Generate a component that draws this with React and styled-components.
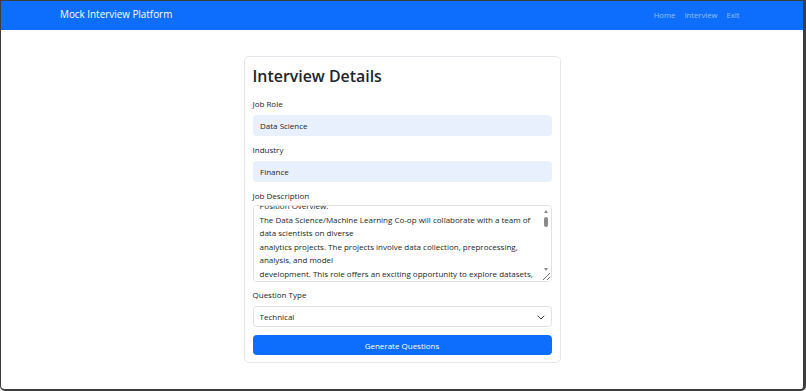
import React, { useEffect, useRef } from "react";
import styled, { createGlobalStyle } from "styled-components";

const GlobalStyle = createGlobalStyle`
  html, body { margin: 0; padding: 0; background: #ffffff; }
  body { font-family: "Open Sans", "Noto Sans", sans-serif; color: #212529; }
  * { box-sizing: border-box; }
`;

const Frame = styled.div`
  height: 391px;
  background: #ffffff;
  border-style: solid;
  border-color: #3c3c3c;
  border-width: 1px 3px 2px 1px;
  border-radius: 0 0 5px 5px;
  overflow: hidden;
`;

const Navbar = styled.nav`
  height: 29px;
  background: #0d6efd;
`;

const NavInner = styled.div`
  height: 100%;
  padding: 0 59px 1px 59px;
  display: flex;
  align-items: center;
  justify-content: space-between;
`;

const Brand = styled.span`
  color: #ffffff;
  font-size: 9.9px;
  line-height: 1;
`;

const NavLinks = styled.div`
  display: flex;
`;

const NavLink = styled.span`
  color: rgba(255, 255, 255, 0.55);
  font-size: 7.7px;
  padding: 0 4.5px;
`;

const Main = styled.main`
  display: flex;
  justify-content: center;
  padding-top: 26px;
`;

const Card = styled.section`
  width: 317px;
  border: 1px solid #e3e6ea;
  border-radius: 5px;
  padding: 8px 8px 7px;
`;

const Title = styled.h2`
  margin: 0 0 9px;
  font-size: 15.9px;
  line-height: 23px;
  font-weight: 600;
  color: #212529;
`;

const Field = styled.div`
  margin-bottom: ${(p) => (p.$last ? "0" : "6.75px")};
`;

const Label = styled.label`
  display: block;
  font-size: 8px;
  line-height: 13.5px;
  margin-bottom: ${(p) => (p.$tight ? "2.5px" : "4.5px")};
  color: #212529;
`;

const Input = styled.input`
  display: block;
  width: 100%;
  height: 21px;
  padding: 0 6.5px;
  font-family: inherit;
  font-size: 8px;
  color: #212529;
  background: ${(p) => (p.$filled ? "#e8f0fe" : "#ffffff")};
  border: 1px solid ${(p) => (p.$filled ? "#e8f0fe" : "#dee2e6")};
  border-radius: 3.5px;
  outline: none;
`;

const AreaWrap = styled.div`
  position: relative;
`;

const TextArea = styled.textarea`
  display: block;
  width: 100%;
  height: 77px;
  padding: 3.4px 14px 3.4px 6px;
  font-family: inherit;
  font-size: 8px;
  line-height: 13.5px;
  color: #212529;
  background: #ffffff;
  border: 1px solid #dee2e6;
  border-radius: 3.5px;
  outline: none;
  resize: vertical;
  white-space: pre-wrap;
  scrollbar-width: none;
  &::-webkit-scrollbar { display: none; }
`;

const ScrollBar = styled.div`
  position: absolute;
  top: 5px;
  right: 3px;
  width: 5px;
  height: 61px;
  display: flex;
  flex-direction: column;
  align-items: center;
  pointer-events: none;
`;

const Arrow = styled.div`
  width: 0;
  height: 0;
  border-left: 2.5px solid transparent;
  border-right: 2.5px solid transparent;
  ${(p) =>
    p.$down
      ? "border-top: 3px solid #8a8a8a; margin-top: auto;"
      : "border-bottom: 3px solid #8a8a8a;"}
`;

const Thumb = styled.div`
  width: 4px;
  height: 10px;
  margin-top: 4px;
  border-radius: 2px;
  background: #8a8a8a;
`;

const SelectWrap = styled.div`
  position: relative;
`;

const Select = styled.select`
  display: block;
  width: 100%;
  height: 21px;
  padding: 0 20px 0 6px;
  font-family: inherit;
  font-size: 8px;
  color: #212529;
  background: #ffffff;
  border: 1px solid #dee2e6;
  border-radius: 3.5px;
  appearance: none;
  outline: none;
`;

const Chevron = styled.svg`
  position: absolute;
  right: 7px;
  top: 50%;
  transform: translateY(-50%);
  pointer-events: none;
`;

const Button = styled.button`
  display: block;
  width: 100%;
  height: 20px;
  margin-top: 8px;
  padding: 0;
  font-family: inherit;
  font-size: 8px;
  color: #ffffff;
  background: #0d6efd;
  border: 1px solid #0d6efd;
  border-radius: 3.5px;
`;

const description = [
  "Job Title: Data Science/Machine Learning Co-op",
  "Position Overview:",
  "The Data Science/Machine Learning Co-op will collaborate with a team of",
  "data scientists on diverse",
  "analytics projects. The projects involve data collection, preprocessing,",
  "analysis, and model",
  "development. This role offers an exciting opportunity to explore datasets,",
  "develop machine learning models, and deliver insights.",
  "",
  "Key Responsibilities:",
  "- Collect, clean and preprocess structured and unstructured data",
  "- Perform exploratory data analysis and feature engineering",
  "- Build, train and evaluate machine learning models",
  "- Communicate findings to stakeholders through reports",
  "- Deploy models and monitor their performance",
  "",
  "Qualifications:",
  "- Pursuing a degree in Computer Science, Statistics or a related field",
  "- Experience with Python, pandas, NumPy and scikit-learn",
  "- Familiarity with SQL and data visualization tools",
  "- Strong analytical and problem-solving skills",
  "",
  "Nice to Have:",
  "- Experience with deep learning frameworks",
  "- Knowledge of cloud platforms",
  "- Prior internship experience",
].join("\n");

export default function App() {
  const areaRef = useRef(null);
  useEffect(() => {
    if (areaRef.current) areaRef.current.scrollTop = 23;
  }, []);

  return (
    <>
      <GlobalStyle />
      <Frame>
        <Navbar>
          <NavInner>
            <Brand>Mock Interview Platform</Brand>
            <NavLinks>
              <NavLink>Home</NavLink>
              <NavLink>Interview</NavLink>
              <NavLink>Exit</NavLink>
            </NavLinks>
          </NavInner>
        </Navbar>
        <Main>
          <Card>
            <Title>Interview Details</Title>
            <Field>
              <Label>Job Role</Label>
              <Input $filled defaultValue="Data Science" />
            </Field>
            <Field>
              <Label>Industry</Label>
              <Input $filled defaultValue="Finance" />
            </Field>
            <Field>
              <Label $tight>Job Description</Label>
              <AreaWrap>
                <TextArea ref={areaRef} defaultValue={description} />
                <ScrollBar>
                  <Arrow />
                  <Thumb />
                  <Arrow $down />
                </ScrollBar>
              </AreaWrap>
            </Field>
            <Field $last>
              <Label>Question Type</Label>
              <SelectWrap>
                <Select defaultValue="Technical">
                  <option>Technical</option>
                  <option>Behavioral</option>
                </Select>
                <Chevron width="8" height="6" viewBox="0 0 16 12">
                  <path d="M2 4l6 6 6-6" fill="none" stroke="#343a40" strokeWidth="2" strokeLinecap="round" strokeLinejoin="round" />
                </Chevron>
              </SelectWrap>
            </Field>
            <Button>Generate Questions</Button>
          </Card>
        </Main>
      </Frame>
    </>
  );
}
